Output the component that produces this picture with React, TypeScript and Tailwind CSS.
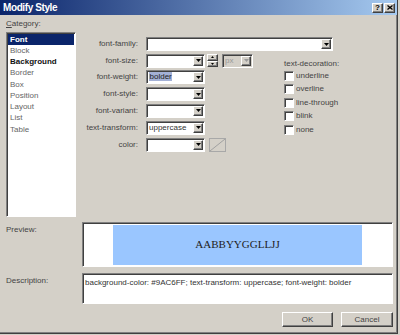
import React from 'react';

const CATEGORIES = [
  { name: 'Font', bold: true, selected: true },
  { name: 'Block' },
  { name: 'Background', bold: true },
  { name: 'Border' },
  { name: 'Box' },
  { name: 'Position' },
  { name: 'Layout' },
  { name: 'List' },
  { name: 'Table' },
];

const DECORATIONS = ['underline', 'overline', 'line-through', 'blink', 'none'];

const sunken =
  'border border-t-[#808080] border-l-[#808080] border-r-white border-b-white shadow-[inset_1px_1px_0_#404040]';
const raised =
  'border border-t-white border-l-white border-r-[#404040] border-b-[#404040] shadow-[inset_-1px_-1px_0_#808080]';

function DropArrow({ disabled }: { disabled?: boolean }) {
  return (
    <div className={`w-[10px] h-[10px] mr-[1px] flex-none flex items-center justify-center bg-[#d4d0c8] ${raised}`}>
      <svg width="5" height="3" viewBox="0 0 5 3">
        <polygon points="0,0 5,0 2.5,3" fill={disabled ? '#9a9a9a' : '#000'} />
      </svg>
    </div>
  );
}

function Combo({ className, children, disabled }: { className: string; children?: React.ReactNode; disabled?: boolean }) {
  return (
    <div className={`h-[14px] flex items-center flex-none ${sunken} ${disabled ? 'bg-[#d4d0c8]' : 'bg-white'} ${className}`}>
      <div className="flex-1 pl-[2px] leading-[12px] text-[#333] overflow-hidden whitespace-nowrap">{children}</div>
      <DropArrow disabled={disabled} />
    </div>
  );
}

function Row({ label, children }: { label: string; children: React.ReactNode }) {
  return (
    <div className="h-[14px] flex items-center">
      <div className="w-[62px] text-right text-[#444] whitespace-nowrap">{label}</div>
      <div className="ml-[8px] flex items-center">{children}</div>
    </div>
  );
}

function SpinArrow({ up }: { up?: boolean }) {
  return (
    <div className={`h-[6.5px] flex items-center justify-center bg-[#d4d0c8] ${raised}`}>
      <svg width="3" height="2" viewBox="0 0 3 2">
        <polygon points={up ? '0,2 3,2 1.5,0' : '0,0 3,0 1.5,2'} fill="#000" />
      </svg>
    </div>
  );
}

function Checkbox({ label }: { label: string }) {
  return (
    <div className="h-[10px] flex items-center gap-[2px]">
      <div className={`w-[10px] h-[10px] bg-white ${sunken}`} />
      <span className="text-[#444] leading-[10px]">{label}</span>
    </div>
  );
}

export default function App() {
  return (
    <div className="w-[400px] h-[335px] bg-[#d4d0c8] font-['Liberation_Sans',Arial,sans-serif] text-[8px]">
      <div className="w-[398px] h-[334px] flex flex-col border-r border-b border-[#404040] shadow-[inset_-1px_-1px_0_#808080]">
        {/* Title bar */}
        <div className="h-[15px] flex-none flex items-center justify-between pl-[3px] pr-[2px] bg-[linear-gradient(90deg,#0a246a,#a6caf0)]">
          <span className="text-white font-bold text-[10px] tracking-[-0.4px]">Modify Style</span>
          <div className="flex gap-[1px]">
            <div className={`w-[11px] h-[10px] flex items-center justify-center bg-[#d4d0c8] ${raised} text-[8px] font-bold leading-none text-black`}>?</div>
            <div className={`w-[11px] h-[10px] flex items-center justify-center bg-[#d4d0c8] ${raised}`}>
              <svg width="6" height="5" viewBox="0 0 6 5">
                <path d="M0.5 0.5 L5.5 4.5 M5.5 0.5 L0.5 4.5" stroke="#000" strokeWidth="1.3" />
              </svg>
            </div>
          </div>
        </div>

        {/* Top section */}
        <div className="h-[202px] flex-none flex pl-[6px]">
          <div className="w-[70px] flex flex-col">
            <div className="h-[17px] flex items-center text-[#444]">
              <span><span className="underline">C</span>ategory:</span>
            </div>
            <div className={`h-[185px] bg-white p-[1px] ${sunken}`}>
              {CATEGORIES.map((c) => (
                <div
                  key={c.name}
                  className={`h-[11.25px] flex items-center pl-[2px] ${c.bold ? 'font-bold' : ''} ${
                    c.selected ? 'bg-[#0a246a] text-white' : c.bold ? 'text-[#111]' : 'text-[#666]'
                  }`}
                >
                  {c.name}
                </div>
              ))}
            </div>
          </div>

          <div className="flex-1 pt-[22px] flex flex-col">
            <Row label="font-family:">
              <Combo className="w-[187px]" />
            </Row>
            <div className="mt-[2.6px] flex">
              <div className="flex flex-col gap-[2.8px]">
                <Row label="font-size:">
                  <Combo className="w-[59px]" />
                  <div className="ml-[2px] w-[11px] flex flex-col">
                    <SpinArrow up />
                    <SpinArrow />
                  </div>
                  <Combo className="ml-[4px] w-[31px]" disabled>
                    <span className="text-[#9a9a9a]">px</span>
                  </Combo>
                </Row>
                <Row label="font-weight:">
                  <Combo className="w-[59px]">
                    <span className="bg-[#a4b1d6] text-[#222] px-[0.5px]">bolder</span>
                  </Combo>
                </Row>
                <Row label="font-style:">
                  <Combo className="w-[59px]" />
                </Row>
                <Row label="font-variant:">
                  <Combo className="w-[59px]" />
                </Row>
                <Row label="text-transform:">
                  <Combo className="w-[59px]">uppercase</Combo>
                </Row>
                <Row label="color:">
                  <Combo className="w-[59px]" />
                  <div className="ml-[4px] w-[17px] h-[14px] border border-[#a8a8a8] bg-[#d4d0c8]">
                    <svg width="15" height="12" viewBox="0 0 15 12">
                      <line x1="0" y1="12" x2="15" y2="0" stroke="#a0a0a0" strokeWidth="1" />
                    </svg>
                  </div>
                </Row>
              </div>

              <div className="ml-[31px] pt-[4px] flex flex-col">
                <div className="h-[12px] leading-[12px] text-[#444]">text-decoration:</div>
                <div className="mt-[1px] flex flex-col gap-[3.5px]">
                  {DECORATIONS.map((d) => (
                    <Checkbox key={d} label={d} />
                  ))}
                </div>
              </div>
            </div>
          </div>
        </div>

        {/* Preview */}
        <div className="mt-[5px] flex pl-[6px] pr-[4px]">
          <div className="w-[76px] pt-[2px] text-[#444]">Preview:</div>
          <div className={`w-[311px] h-[45px] bg-white flex items-center justify-center ${sunken}`}>
            <div className="w-[249px] h-[40px] bg-[#9ac6ff] flex items-center justify-center font-['Liberation_Serif',serif] text-[11px] text-[#222] uppercase">
              AABBYYGGLLJJ
            </div>
          </div>
        </div>

        {/* Description */}
        <div className="mt-[6px] flex pl-[6px] pr-[4px]">
          <div className="w-[76px] pt-[2px] text-[#444]">Description:</div>
          <div className={`w-[311px] h-[31px] bg-white px-[2px] pt-[3px] text-[#333] ${sunken}`}>
            background-color: #9AC6FF; text-transform: uppercase; font-weight: bolder
          </div>
        </div>

        {/* Buttons */}
        <div className="mt-[8px] flex justify-end gap-[8px] pr-[4px]">
          <button className={`w-[51px] h-[15px] bg-[#d4d0c8] text-[#444] ${raised}`}>OK</button>
          <button className={`w-[52px] h-[15px] bg-[#d4d0c8] text-[#444] ${raised}`}>Cancel</button>
        </div>
      </div>
    </div>
  );
}
